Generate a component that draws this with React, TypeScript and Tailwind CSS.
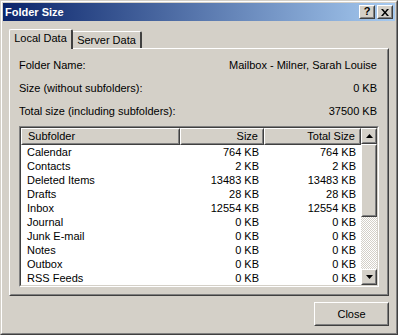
import { useState } from "react"

const rows = [
  { name: "Calendar", size: "764 KB", total: "764 KB" },
  { name: "Contacts", size: "2 KB", total: "2 KB" },
  { name: "Deleted Items", size: "13483 KB", total: "13483 KB" },
  { name: "Drafts", size: "28 KB", total: "28 KB" },
  { name: "Inbox", size: "12554 KB", total: "12554 KB" },
  { name: "Journal", size: "0 KB", total: "0 KB" },
  { name: "Junk E-mail", size: "0 KB", total: "0 KB" },
  { name: "Notes", size: "0 KB", total: "0 KB" },
  { name: "Outbox", size: "0 KB", total: "0 KB" },
  { name: "RSS Feeds", size: "0 KB", total: "0 KB" },
]

// raised 3d edge used by buttons and header cells
const raised = "border border-t-white border-l-white border-r-[#404040] border-b-[#404040]"
const raisedInner = "border border-t-[#d4d0c8] border-l-[#d4d0c8] border-r-[#808080] border-b-[#808080]"

function Raised({ className = "", children }: { className?: string; children?: React.ReactNode }) {
  return (
    <div className={`${raised} bg-[#d4d0c8] ${className}`}>
      <div className={`${raisedInner} w-full h-full flex items-center justify-center`}>{children}</div>
    </div>
  )
}

export default function App() {
  const [tab, setTab] = useState("local")

  return (
    <div
      className="w-[398px] h-[335px] bg-[#d4d0c8] border border-t-[#d4d0c8] border-l-[#d4d0c8] border-r-[#404040] border-b-[#404040] text-[11px] text-black"
      style={{ fontFamily: '"Liberation Sans", Arial, sans-serif' }}
    >
      <div className="w-full h-full border border-t-white border-l-white border-r-[#808080] border-b-[#808080] p-px flex flex-col">
        {/* title bar */}
        <div className="h-[18px] shrink-0 flex items-center pl-[2px] pr-[2px] bg-[linear-gradient(to_right,#0a246a,#a6caf0)]">
          <span className="flex-1 text-white font-bold text-[11px] leading-none">Folder Size</span>
          <Raised className="w-[16px] h-[14px]">
            <span className="font-bold text-[11px] leading-none -mt-px">?</span>
          </Raised>
          <Raised className="w-[16px] h-[14px] ml-[2px]">
            <svg width="8" height="7" viewBox="0 0 8 7">
              <path d="M0 0h2l2 2.5L6 0h2L5 3.5 8 7H6L4 4.5 2 7H0l3-3.5z" fill="#000" />
            </svg>
          </Raised>
        </div>

        {/* body */}
        <div className="flex-1 flex flex-col px-[6px] pt-[8px] pb-[6px]">
          <div className="flex items-end h-[19px] shrink-0">
            <button
              onClick={() => setTab("local")}
              className="relative z-10 -mb-px h-[20px] w-[64px] bg-[#d4d0c8] border-t border-l border-t-white border-l-white border-r-2 border-r-[#404040] rounded-tl-[2px] rounded-tr-[2px] flex items-center justify-center pb-[2px]"
            >
              Local Data
            </button>
            <button
              onClick={() => setTab("server")}
              className="h-[17px] w-[69px] bg-[#d4d0c8] border-t border-t-white border-r-2 border-r-[#404040] rounded-tr-[2px] flex items-center justify-center"
            >
              Server Data
            </button>
          </div>

          <div className="h-[248px] shrink-0 border border-t-white border-l-white border-r-[#404040] border-b-[#404040]">
            <div className="h-full border border-t-[#d4d0c8] border-l-[#d4d0c8] border-r-[#808080] border-b-[#808080] flex flex-col px-[8px] pt-[9px] pb-[7px]">
              <div className="flex flex-col gap-[10px] pr-[2px]">
                <div className="flex justify-between h-[13px] leading-[13px]">
                  <span>Folder Name:</span>
                  <span>Mailbox - Milner, Sarah Louise</span>
                </div>
                <div className="flex justify-between h-[13px] leading-[13px]">
                  <span>Size (without subfolders):</span>
                  <span>0 KB</span>
                </div>
                <div className="flex justify-between h-[13px] leading-[13px]">
                  <span>Total size (including subfolders):</span>
                  <span>37500 KB</span>
                </div>
              </div>

              {/* list view */}
              <div className="mt-[8px] h-[161px] border border-t-[#808080] border-l-[#808080] border-r-white border-b-white">
                <div className="h-full border border-t-[#404040] border-l-[#404040] border-r-[#d4d0c8] border-b-[#d4d0c8] bg-white flex overflow-hidden">
                  <div className="flex-1 flex flex-col">
                    <div className="flex h-[17px] shrink-0">
                      <div className={`${raised} bg-[#d4d0c8] w-[159px]`}>
                        <div className={`${raisedInner} h-full flex items-center pl-[5px]`}>Subfolder</div>
                      </div>
                      <div className={`${raised} bg-[#d4d0c8] w-[84px]`}>
                        <div className={`${raisedInner} h-full flex items-center justify-end pr-[4px]`}>Size</div>
                      </div>
                      <div className={`${raised} bg-[#d4d0c8] flex-1`}>
                        <div className={`${raisedInner} h-full flex items-center justify-end pr-[4px]`}>Total Size</div>
                      </div>
                    </div>
                    {rows.map((r) => (
                      <div key={r.name} className="flex h-[14px] shrink-0 leading-[14px]">
                        <div className="w-[159px] pl-[6px]">{r.name}</div>
                        <div className="w-[84px] text-right pr-[5px]">{r.size}</div>
                        <div className="flex-1 text-right pr-[5px]">{r.total}</div>
                      </div>
                    ))}
                  </div>

                  {/* scrollbar */}
                  <div className="w-[16px] shrink-0 flex flex-col">
                    <Raised className="h-[16px] shrink-0">
                      <svg width="7" height="4" viewBox="0 0 7 4"><path d="M3.5 0L7 4H0z" fill="#000" /></svg>
                    </Raised>
                    <Raised className="h-[73px] shrink-0" />
                    <div className="flex-1 bg-[repeating-conic-gradient(#ffffff_0_25%,#d4d0c8_0_50%)] bg-[length:2px_2px]" />
                    <Raised className="h-[16px] shrink-0">
                      <svg width="7" height="4" viewBox="0 0 7 4"><path d="M0 0h7L3.5 4z" fill="#000" /></svg>
                    </Raised>
                  </div>
                </div>
              </div>
            </div>
          </div>

          <div className="flex justify-end mt-[6px]">
            <button className="w-[75px] h-[24px] border border-t-white border-l-white border-r-[#404040] border-b-[#404040] bg-[#d4d0c8]">
              <div className="w-full h-full border border-t-[#d4d0c8] border-l-[#d4d0c8] border-r-[#808080] border-b-[#808080] flex items-center justify-center">
                Close
              </div>
            </button>
          </div>
        </div>
      </div>
    </div>
  )
}
